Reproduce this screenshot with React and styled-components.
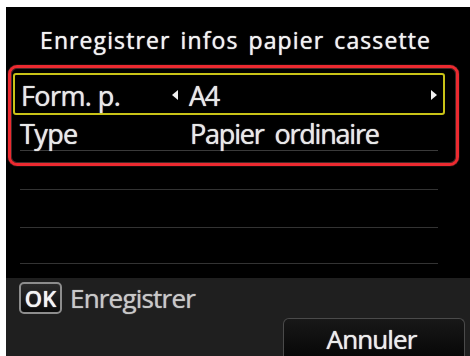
import styled, { createGlobalStyle } from 'styled-components';

const Global = createGlobalStyle`
  html, body { margin: 0; padding: 0; background: #fff; }
  body { width: 470px; height: 356px; overflow: hidden; }
`;

const font = `"Open Sans", "DejaVu Sans", sans-serif`;

const Screen = styled.div`
  margin: 7px 0 0 6px;
  width: 464px;
  height: 349px;
  background: #000;
  display: flex;
  flex-direction: column;
  font-family: ${font};
  color: #e8e8e8;
  overflow: hidden;
  & > * { flex: none; }
`;

const Title = styled.div`
  height: 58px;
  box-sizing: border-box;
  padding: 22px 0 0 34px;
  font-size: 23px;
  line-height: 23px;
  letter-spacing: 1.1px;
  word-spacing: 3px;
  color: #f2f2f2;
  text-shadow: 0 0 1px #fff;
  white-space: nowrap;
`;

const Selection = styled.div`
  margin-left: 2px;
  width: 451px;
  height: 101px;
  box-sizing: border-box;
  border: 3px solid #ec2a30;
  border-radius: 9px;
  box-shadow: inset 0 0 0 1px #ff9a9a44, 0 0 1px #ff6b6b;
  padding: 5px 0 0 2px;
`;

const Focus = styled.div`
  width: 432px;
  height: 42px;
  box-sizing: border-box;
  border: 2px solid #c9c317;
  border-radius: 3px;
  display: flex;
  align-items: center;
  padding: 3px 0 0 6px;
`;

const Row = styled.div`
  display: flex;
  align-items: center;
  height: 36px;
  box-sizing: border-box;
  padding-top: 2px;
  margin-left: 7px;
  width: 418px;
  border-bottom: 1px solid #3a3a3a;
`;

const Label = styled.span`
  width: ${({ $w }) => $w}px;
  flex: none;
  font-size: 27px;
  line-height: 27px;
  letter-spacing: -0.6px;
  text-shadow: 0 0 1px #fff;
`;

const Value = styled.span`
  flex: 1;
  font-size: 27px;
  line-height: 27px;
  letter-spacing: -1.2px;
  word-spacing: 5px;
  text-shadow: 0 0 1px #fff;
`;

const Arrow = styled.span`
  flex: none;
  width: 0;
  height: 0;
  border-top: 5px solid transparent;
  border-bottom: 5px solid transparent;
  ${({ $dir }) => ($dir === 'left' ? 'border-right' : 'border-left')}: 6px solid #f0f0f0;
  margin: 0 ${({ $mr }) => $mr}px 2px 0;
`;

const Empty = styled.div`
  margin: ${({ $top }) => $top}px 0 0 14px;
  width: 418px;
  height: 1px;
  background: #333;
`;

const Footer = styled.div`
  margin-top: 14px;
  flex: 1 !important;
  background: #1f1f1f;
  display: flex;
  flex-direction: column;
  padding: 4px 0 0 13px;
`;

const OkLine = styled.div`
  display: flex;
  align-items: center;
  gap: 8px;
  height: 32px;
  font-size: 26px;
  line-height: 26px;
  letter-spacing: -0.8px;
  color: #c8c8c8;
  text-shadow: 0 0 1px #bbb;
`;

const OkKey = styled.span`
  width: 43px;
  height: 32px;
  box-sizing: border-box;
  border: 2px solid #8d8d8d;
  border-radius: 5px;
  background: linear-gradient(#2a2a2a, #0c0c0c);
  color: #f4f4f4;
  font-size: 22px;
  font-weight: 600;
  letter-spacing: 0;
  display: flex;
  align-items: center;
  justify-content: center;
  text-shadow: 0 0 1px #fff;
`;

const Cancel = styled.div`
  margin: 4px 0 0 264px;
  width: 182px;
  height: 44px;
  flex: none;
  box-sizing: border-box;
  border: 1px solid #4a4a4a;
  border-bottom: none;
  border-radius: 6px 6px 0 0;
  background: linear-gradient(#181818, #050505);
  display: flex;
  justify-content: center;
  padding: 7px 5px 0 0;
  font-size: 26px;
  line-height: 26px;
  letter-spacing: -0.9px;
  color: #ececec;
  text-shadow: 0 0 1px #fff;
`;

export default function App() {
  return (
    <>
      <Global />
      <Screen>
        <Title>Enregistrer infos papier cassette</Title>
        <Selection>
          <Focus>
            <Label $w={151}>Form. p.</Label>
            <Arrow $dir="left" $mr={11} />
            <Value>A4</Value>
            <Arrow $dir="right" $mr={6} />
          </Focus>
          <Row>
            <Label $w={170}>Type</Label>
            <Value>Papier ordinaire</Value>
          </Row>
        </Selection>
        <Empty $top={23} />
        <Empty $top={37} />
        <Empty $top={35} />
        <Footer>
          <OkLine>
            <OkKey>OK</OkKey>
            Enregistrer
          </OkLine>
          <Cancel>Annuler</Cancel>
        </Footer>
      </Screen>
    </>
  );
}
